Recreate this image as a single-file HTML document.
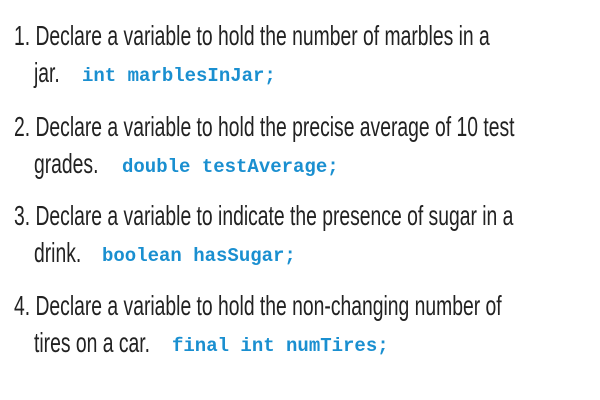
<!DOCTYPE html>
<html><head><style>
html,body{margin:0;padding:0;background:#fff;width:600px;height:400px;overflow:hidden;position:relative}
.t{position:absolute;left:14px;font-family:"Liberation Sans",sans-serif;font-size:28px;line-height:28px;color:#222;white-space:nowrap;transform:scaleX(0.69);transform-origin:0 0}
.c{position:absolute;font-family:"Liberation Mono",monospace;font-weight:bold;font-size:19px;line-height:20px;color:#1a8fd0;white-space:nowrap}
</style></head><body>
<div class="t" style="top:22px">1. Declare a variable to hold the number of marbles in a</div>
<div class="t" style="top:59px;left:34px">jar.</div>
<div class="c" style="top:66px;left:82px">int marblesInJar;</div>

<div class="t" style="top:113px">2. Declare a variable to hold the precise average of 10 test</div>
<div class="t" style="top:150px;left:34px">grades.</div>
<div class="c" style="top:157px;left:122px">double testAverage;</div>

<div class="t" style="top:202px">3. Declare a variable to indicate the presence of sugar in a</div>
<div class="t" style="top:239px;left:34px">drink.</div>
<div class="c" style="top:246px;left:102px">boolean hasSugar;</div>

<div class="t" style="top:292px">4. Declare a variable to hold the non-changing number of</div>
<div class="t" style="top:329px;left:34px">tires on a car.</div>
<div class="c" style="top:336px;left:172px">final int numTires;</div>
</body></html>
